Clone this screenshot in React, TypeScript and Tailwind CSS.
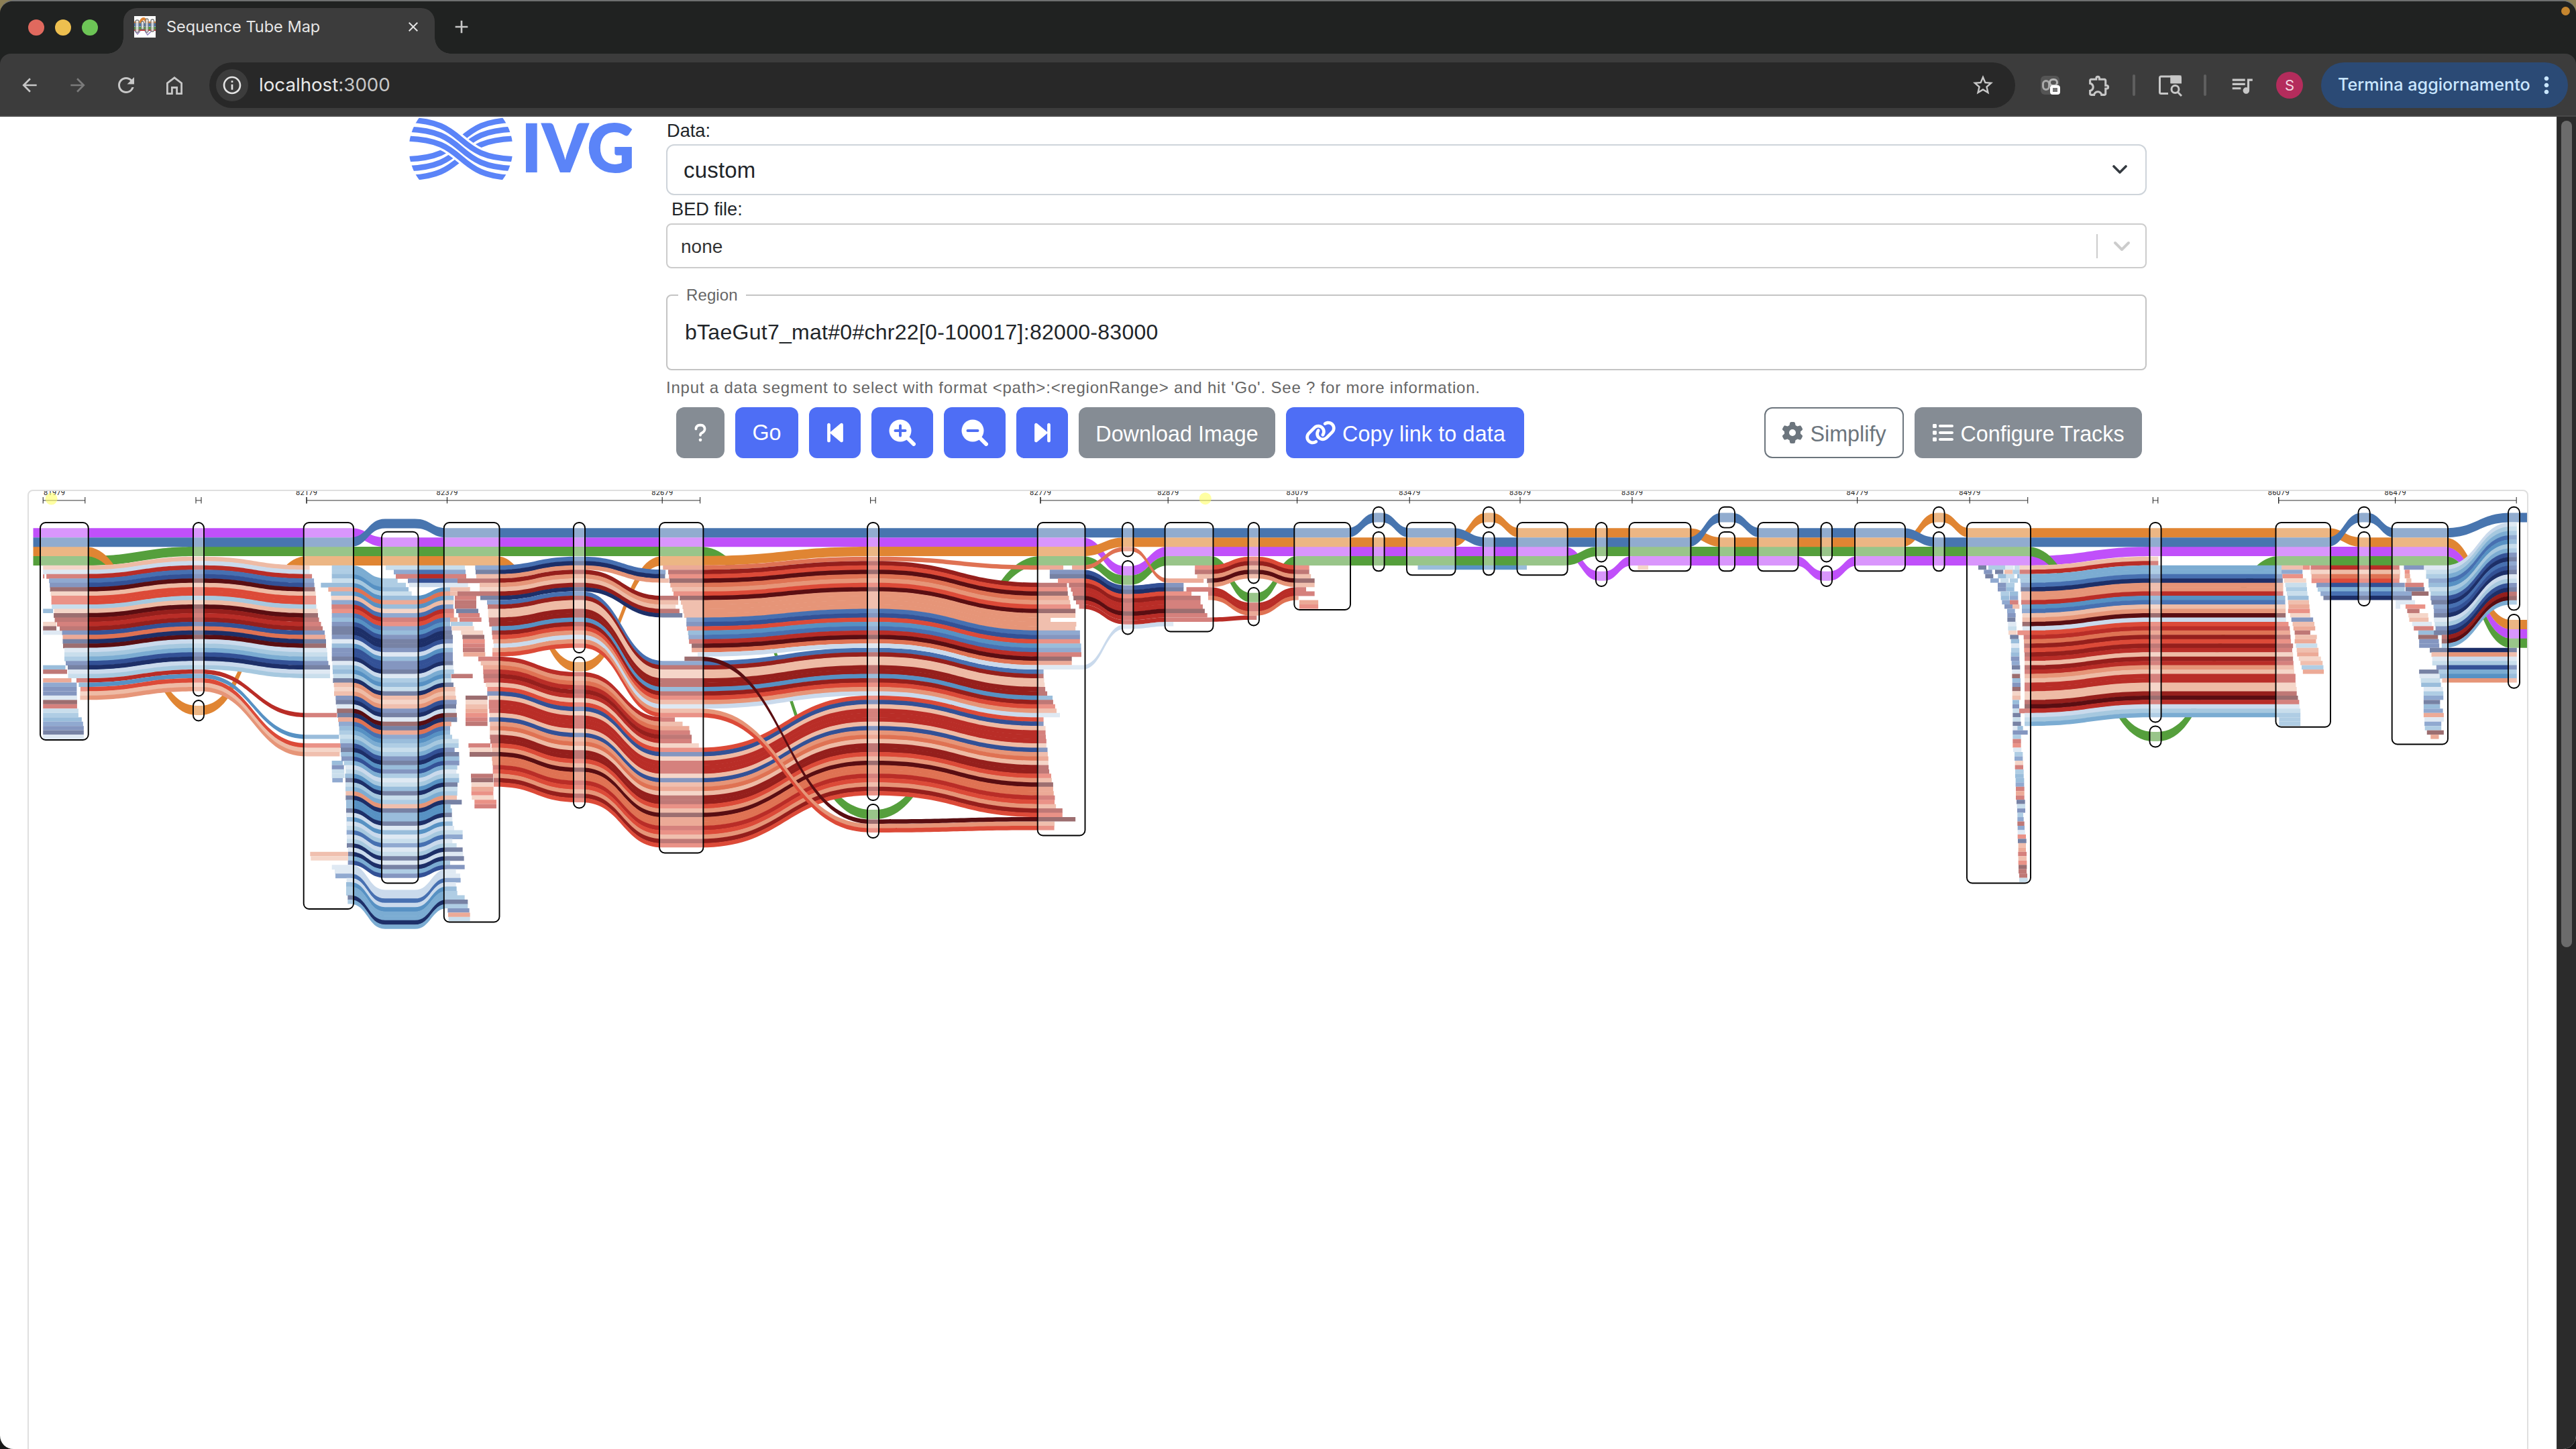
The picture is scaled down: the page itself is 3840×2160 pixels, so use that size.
import React from "react";
import { FaBackwardStep, FaForwardStep, FaLink, FaGear, FaList, FaQuestion } from "react-icons/fa6";
import {
  MdArrowBack,
  MdArrowForward,
  MdRefresh,
  MdInfoOutline,
  MdStarBorder,
  MdOutlineExtension,
  MdQueueMusic,
  MdMoreVert,
  MdClose,
  MdAdd,
} from "react-icons/md";

/* ------------------------------------------------------------------ */
/* Tube map data                                                       */
/* ------------------------------------------------------------------ */

const PALETTE: Record<string, string> = {
  p: "#EEBBA5",
  o: "#E69578",
  c: "#DF7253",
  r: "#DC4A38",
  d: "#B92D27",
  m: "#951F1C",
  k: "#5A0E12",
  l: "#CADAEC",
  i: "#A6C8DF",
  s: "#7BACD2",
  t: "#5791C3",
  b: "#4770B1",
  n: "#335196",
  y: "#1D2F68",
};

const READ = 6.47;
const HAP = 13.87;
const R = (row: number) => 842.8 + READ * row;
const H = (row: number) => 787.3 + HAP * row;
const UP = 764.5;

/* x extents of every node column, left to right */
const N: [number, number][] = [
  [0, 0],
  [60, 131.7],
  [288, 304],
  [452.7, 527],
  [569, 623.5],
  [661.8, 744.5],
  [855, 872],
  [983, 1048.4],
  [1293, 1310],
  [1546.7, 1617.5],
  [1673, 1689.4],
  [1736.6, 1808.5],
  [1860.7, 1877],
  [1929.3, 2013],
  [2046.8, 2063.6],
  [2097, 2169.6],
  [2211, 2227.7],
  [2261.5, 2336.7],
  [2379, 2395.4],
  [2428.6, 2520.4],
  [2562.5, 2586],
  [2620.5, 2680.5],
  [2714.5, 2731],
  [2765, 2840],
  [2882, 2898.6],
  [2932, 3027],
  [3204.5, 3221.6],
  [3392.5, 3474],
  [3515.5, 3532.7],
  [3565.7, 3649],
  [3739, 3756],
];

/* [column, top, bottom] of each node outline */
const BOXES: [number, number, number][] = [
  [1, 779, 1103],
  [2, 779, 1037.5],
  [2, 1044, 1074.5],
  [3, 779, 1355],
  [4, 792.8, 1316.5],
  [5, 779, 1374.5],
  [6, 779, 973],
  [6, 979.5, 1204.5],
  [7, 779, 1271.5],
  [8, 779, 1193],
  [8, 1199, 1249],
  [9, 779, 1245.5],
  [10, 779, 829.5],
  [10, 836, 945.5],
  [11, 779, 941.5],
  [12, 779, 869.5],
  [12, 876, 932.5],
  [13, 779, 909],
  [14, 755.8, 786.6],
  [14, 793, 851.3],
  [15, 779, 857.3],
  [16, 755.8, 786.6],
  [16, 793, 857.3],
  [17, 779, 857.3],
  [18, 779, 837.5],
  [18, 843.7, 874],
  [19, 779, 851.3],
  [20, 755.8, 786.6],
  [20, 793, 851.3],
  [21, 779, 851.3],
  [22, 779, 837.5],
  [22, 843.7, 874],
  [23, 779, 851.3],
  [24, 755.8, 786.6],
  [24, 793, 851.3],
  [25, 779, 1316.5],
  [26, 779, 1076.5],
  [26, 1082.5, 1113.5],
  [27, 779, 1083.7],
  [28, 755.8, 786.6],
  [28, 793, 903],
  [29, 779, 1109.5],
  [30, 755.8, 909.4],
  [30, 916, 1025.7],
];

const PURPLE = [0, 0, 0, 1, 1, 1, 1, 1, 1, 843.9, 2, 2, 2, 2, 2, 2, 2, 851.7, 3, 3, 3, 851.7, 3, 3, 3, 2, 2, 2, 2, 938];
const BLUE = [1, 1, 1, 773.4, 0, 0, 0, 0, 0, 0, 0, 0, 0, UP, 0, 1, 1, 1, 1, UP, 0, 0, 0, 1, 1, 1, 1, UP, 0, UP];
const ORANGE = [2, 1051.9, 3, 3, 3, 987, 3, 2, 2, 1, 1, 1, 1, 1, 1, UP, 0, 0, 0, 1, 1, 1, 1, UP, 0, 0, 0, 1, 1, 924];
const GREEN = [3, 2, 2, 2, 2, 2, 2, 1207, 3, 857.7, 3, 883.8, 3, 3, 3, 3, 3, 2, 2, 2, 2, 2, 2, 2, 2, 1091, 3, 3, 3, 951.8];

type Knot = [number, number];

const INSET = 5;

/* Outline of a constant-height ribbon running through a list of columns */
function ribbon(start: number, end: number, knots: Knot[], h: number): string {
  const pts = knots.map(([c, y]) => ({ a: N[c][0] + INSET, b: N[c][1] - INSET, y }));
  let d = `M${start} ${pts[0].y}`;
  for (let j = 1; j < pts.length; j++) {
    const p = pts[j - 1];
    const q = pts[j];
    const from = Math.max(p.b, j === 1 ? start : p.b);
    const m = (from + q.a) / 2;
    d += `H${from}C${m} ${p.y} ${m} ${q.y} ${q.a} ${q.y}`;
  }
  const last = pts[pts.length - 1];
  d += `H${end}V${last.y + h}`;
  for (let j = pts.length - 1; j > 0; j--) {
    const p = pts[j - 1];
    const q = pts[j];
    const from = Math.max(p.b, j === 1 ? start : p.b);
    const m = (from + q.a) / 2;
    d += `H${q.a}C${m} ${q.y + h} ${m} ${p.y + h} ${from} ${p.y + h}`;
  }
  return d + `H${start}Z`;
}

const axis = (offset: number, k: number) => (v: number) => offset + v / k;
const xa = axis(0, 2.0103);
const xb = axis(450, 3);
const xc = axis(640, 2.8);
const xd = axis(1000, 2.3758);
const xe = axis(1540, 2.3758);
const xf = axis(2880, 1.6333);
const xg = axis(2930, 3);

type Group = { c: string; x0: number[]; x1: number[]; k: Knot[] };

const seq = (s: string) => s.split(" ").map(Number);

const GROUPS: Group[] = [
  {
    c: "pldbnkprripkmdmncyklisnyli",
    x0: seq("129 129 139 147 149 150 152 154 154 155 162 161 164 171 179 186 188 188 189 193 193 193 197 203 204 204").map(xa),
    x1: seq("928 928 935 941 942 944 946 947 947 948 952 953 956 962 967 973 975 977 977 980 981 981 984 989 989 989").map(xa),
    k: [[1, R(0)], [2, R(-2)], [3, R(0)]],
  },
  { c: "d", x0: [xa(229)], x1: [xa(1010)], k: [[1, R(26)], [2, R(24)], [3, R(34)]] },
  { c: "t", x0: [xa(236)], x1: [xa(1016)], k: [[1, R(27)], [2, R(25)], [3, R(39)]] },
  { c: "rpo", x0: [xa(241), xa(240), xa(240)], x1: [xa(1021), xa(1020), xa(1018)], k: [[1, R(28)], [2, R(26)], [3, R(41)]] },
  { c: "ssti", x0: seq("134 134 134 134").map(xb), x1: seq("428 465 477 491").map(xb), k: [[3, R(0)], [4, R(3)]] },
  {
    c: "tctpbdrbtnyynltnnylstiyoponylkycbtsisnytnslityisoyttyltlibliylysn",
    x0: seq(
      "85 118 130 131 133 133 134 134 134 134 134 134 134 134 134 134 134 134 136 137 138 140 139 143 145 144 151 152 155 157 159 162 165 167 167 170 171 173 174 175 177 188 195 196 193 195 195 195 196 196 198 198 198 198 200 199 200 200 201 201 201 206 207 207 206"
    ).map(xb),
    x1: seq(
      "663 663 679 679 677 680 680 663 663 669 671 675 675 675 675 675 675 676 677 680 666 668 678 686 686 689 692 690 689 693 694 668 663 663 672 701 701 683 703 704 704 695 691 703 703 696 696 695 693 715 665 671 671 673 674 681 719 719 673 692 719 721 725 663 728"
    ).map(xb),
    k: [[3, R(4)], [4, R(7)], [5, R(5)]],
  },
  {
    c: "llbltssys",
    x0: seq("134 147 150 200 198 198 198 205 205").map(xb),
    x1: seq("689 708 710 689 692 695 728 742 742").map(xb),
    k: [[3, R(69)], [4, R(69) + 37.2], [5, R(70)]],
  },
  { c: "ibdnl", x0: seq("375 411 420 474 480").map(xb), x1: seq("729 732 735 696 743").map(xb), k: [[4, R(0)], [5, R(0)]] },
  { c: "byo", x0: seq("775 777 780").map(xb), x1: seq("986 984 1000").map(xc), k: [[5, R(0)], [6, R(-2)], [7, R(1)]] },
  {
    c: "mopmy",
    x0: seq("696 795 795 696 798").map(xb),
    x1: seq("1039 1039 1028 1044 1056").map(xc),
    k: [[5, R(3)], [6, R(1)], [7, R(7)]],
  },
  {
    c: "bmppmmtmrol",
    x0: seq("828 831 833 833 836 838 849 850 852 856 858").map(xb),
    x1: seq("1320 1320 1322 1324 1326 1333 1352 1354 1361 1366 1378").map(xd),
    k: [[5, R(8)], [6, R(6)], [7, R(22)], [8, R(19)], [9, R(24)]],
  },
  {
    c: "docdmdp",
    x0: seq("789 800 810 811 812 814 823").map(xb),
    x1: seq("1025 1057 1085 1088 1095 1095 1125").map(xc),
    k: [[5, R(21)], [6, 1001.8], [7, R(35)]],
  },
  {
    c: "rnpdddpnocpmmrokccdromr",
    x0: seq("829 829 836 836 836 838 840 838 841 841 840 841 843 848 850 750 850 852 854 854 858 858 858").map(xb),
    x1: seq(
      "1320 1320 1327 1327 1328 1330 1330 1334 1335 1337 1337 1338 1340 1347 1349 1354 1354 1356 1360 1359 1364 1387 1387"
    ).map(xd),
    k: [[5, R(28)], [6, 1001.8 + 7 * READ], [7, R(42)], [8, R(30)], [9, R(35)]],
  },
  { c: "c", x0: [xc(975)], x1: [xd(1390)], k: [[7, R(0)], [8, R(-2)], [9, R(0)]] },
  {
    c: "mrkcorkoooobnrtbdkc",
    x0: seq("997 1000 1002 1006 1013 1019 1045 1050 1057 1060 1064 1073 1073 1075 1080 1082 1084 1095 1095").map(xc),
    x1: seq("1403 1405 1406 1410 1414 1416 1433 1433 1345 1436 1433 1449 1449 1449 1453 1453 1454 1420 1420").map(xd),
    k: [[7, R(1)], [8, R(-1)], [9, R(4)]],
  },
  {
    c: "l",
    x0: [xc(1120)],
    x1: [xe(497)],
    k: [[7, R(20)], [8, R(18)], [9, R(23)], [10, 930.7], [11, R(13)]],
  },
  {
    c: "or",
    x0: [xb(852), xb(852)],
    x1: [xd(1359), xd(1358)],
    k: [[5, R(19)], [6, R(17)], [7, R(33)], [8, 1228], [9, R(59)]],
  },
  { c: "k", x0: [xc(1065)], x1: [xd(1433)], k: [[7, R(21)], [8, 1221.5], [9, R(58)]] },
  {
    c: "nyrmddkd",
    x0: seq("59 59 88 127 134 140 143 152").map(xe),
    x1: seq("533 533 561 593 593 601 608 617").map(xe),
    k: [[9, R(1)], [10, 872.5], [11, R(4)]],
  },
  { c: "d", x0: [xe(163)], x1: [xe(792)], k: [[9, R(9)], [10, 872.5 + 8 * READ], [11, R(12)], [12, 917.6]] },
  { c: "c", x0: [xe(138)], x1: [xe(604)], k: [[9, R(0)], [10, 815.3], [11, R(3)]] },
  {
    c: "rmoko",
    x0: seq("573 573 581 616 620").map(xe),
    x1: seq("978 978 984 997 997").map(xe),
    k: [[11, R(0)], [12, R(-2)], [13, R(0)]],
  },
  { c: "ddc", x0: seq("543 620 620").map(xe), x1: seq("967 997 940").map(xe), k: [[11, R(5)], [12, 898.3], [13, R(5)]] },
  { c: "t", x0: [2113.5], x1: [2276], k: [[15, R(0)], [17, R(0)]] },
  { c: "pd", x0: [xg(242), xg(242)], x1: [3217.4, 3217.4], k: [[25, R(0)], [26, R(-2)]] },
  {
    c: "ssbyoodtbpoklrdcmrmdpmdopddppmkdlis",
    x0: seq(
      "243 245 247 247 249 249 249 252 252 254 254 254 255 232 260 261 262 262 264 264 264 264 264 264 264 264 264 264 264 264 264 240 264 264 264"
    ).map(xg),
    x1: seq(
      "851 851 853 854 855 855 855 860 860 861 861 861 862 868 871 872 873 874 879 877 879 879 880 881 882 885 885 886 888 888 891 894 895 897 897"
    ).map(xf),
    k: [[25, R(2)], [26, R(0)], [27, R(0)]],
  },
  {
    c: "dpcrnsby",
    x0: seq("922 922 924 924 936 939 946 953").map(xf),
    x1: seq("1138 1140 1139 1138 1151 1151 1168 1168").map(xf),
    k: [[27, R(0)], [29, R(0)]],
  },
  {
    c: "lisbtisnybnylinymks",
    x0: seq("1198 1203 1203 1209 1209 1211 1214 1214 1216 1221 1222 1222 1222 1224 1226 1222 1241 1241 1241").map(xf),
    x1: Array(19).fill(3751.8),
    k: [[29, R(0)], [30, 778.4]],
  },
  {
    c: "yolinsto",
    x0: seq("1212 1216 1218 1218 1228 1234 1236 1242").map(xf),
    x1: Array(8).fill(3751.8),
    k: [[29, R(19)], [30, R(19)]],
  },
];

/* Short reads lying inside one node: "row colour x0 x1" */
const LOOSE: [(v: number) => number, string][] = [
  [
    xa,
    "2 d 129 133,10 t 129 159,13 p 129 169,14 k 129 169,15 l 129 186,23 t 129 196,24 m 129 201,26 c 129 214,27 b 129 230,28 n 129 230,29 n 129 230,30 l 129 231,31 k 129 231,32 d 129 231,33 i 129 235,34 s 129 235,35 t 129 245,36 b 129 249,37 n 129 251,38 y 129 251,39 l 129 251",
  ],
  [
    xb,
    "45 t 134 183,46 n 134 188,47 i 134 190,48 i 134 190,49 b 136 183,66 o 37 207,67 p 40 207,79 n 652 749,80 c 654 752,81 i 656 752,5 o 663 752,6 o 663 698,7 d 684 780,8 m 684 780,9 m 684 780,10 y 690 789,11 d 700 795,12 c 663 696,12 d 705 803,13 s 666 764,14 p 670 770,15 p 712 810,16 k 718 816,17 r 720 818,18 d 720 818,19 m 720 818,20 c 722 820,25 m 668 764,30 k 732 830,31 p 732 830,32 o 732 830,33 c 732 830,34 r 732 830,35 d 732 830,36 m 732 830,41 d 745 843,42 p 750 848,48 m 756 856,49 k 757 856,50 p 758 857,51 c 758 857,52 r 758 856,53 p 760 858,54 r 772 870,55 d 772 870",
  ],
  [xe, "8 c 943 1010,9 r 943 1010"],
  [axis(0, 1), "0 p 2441.5 2457"],
  [
    xf,
    "35 s 845 897,36 s 845 897,0 o 851 903,0 r 903 920,1 b 851 902,2 r 853 903,3 p 857 911,4 i 860 912,5 s 862 913,6 i 864 914,7 t 866 917,8 o 867 918,9 c 868 919,10 r 867 920,11 p 872 921,12 n 875 928,13 o 878 931,14 c 880 933,15 m 883 921,16 o 884 937,17 c 883 935,18 i 886 938,19 o 888 941,20 c 889 941,21 p 893 947,22 o 897 951,23 s 900 953,24 c 903 954,0 n 1149 1198,1 r 1151 1163,2 c 1151 1164,3 o 1155 1167,4 d 1152 1197,5 y 1153 1199,6 k 1160 1209,8 l 1129 1176,9 l 1129 1140,9 r 1153 1201,10 m 1157 1187,11 p 1160 1208,12 o 1162 1209,13 l 1169 1217,14 d 1173 1221,15 t 1184 1232,16 k 1184 1232,17 n 1186 1234,18 n 1186 1235,24 y 1186 1234,25 l 1187 1236,26 i 1190 1237,27 t 1191 1239,28 l 1197 1244,29 s 1197 1245,30 b 1197 1245,31 y 1197 1237,32 t 1197 1237,33 b 1197 1244,34 c 1197 1246,35 l 1199 1246,36 b 1199 1240,37 s 1200 1240,38 k 1205 1246,39 c 1214 1234",
  ],
  [
    xg,
    "0 y 57 93,0 s 102 177,0 l 177 215,0 i 219 242,1 n 82 119,1 y 132 169,1 o 174 211,1 s 211 242,2 y 88 124,2 t 145 182,2 i 182 218,2 t 231 242,3 b 111 149,3 i 156 193,3 s 198 234,4 n 144 182,4 s 182 219,5 n 144 182,5 t 182 218,6 s 157 195,6 t 197 235,7 t 158 195,7 b 197 235,8 b 163 198,8 d 198 236,9 n 174 210,9 o 210 241,10 b 186 221,11 n 187 224,12 y 187 223,13 l 190 227,14 i 190 228,15 p 192 229,16 y 199 237,17 t 203 240,18 l 204 241,19 s 204 241,20 t 203 241,21 n 203 241,22 b 206 242,23 y 207 244,24 l 208 245,25 k 208 244,26 t 209 246,27 n 209 246,28 k 209 246,29 p 209 246,30 o 209 246,31 t 210 240,32 n 210 240,33 i 211 240,34 y 211 246,35 i 211 246,36 y 211 248,37 l 211 232,37 t 232 257,38 n 211 278,39 s 211 248,40 d 211 248,41 r 211 248,42 l 213 250,43 s 219 256,44 b 219 256,45 p 221 258,46 d 221 258,47 s 222 260,48 t 222 260,49 t 224 262,50 b 224 262,51 d 225 263,52 c 225 263,53 d 225 263,54 y 228 266,55 i 230 267,56 n 231 267,57 s 232 258,58 b 232 260,59 m 232 263,60 b 233 264,61 l 233 266,62 r 233 270,63 y 234 272,64 o 236 270,65 c 236 270,66 d 235 273,67 o 236 273,68 r 236 274,69 k 237 274,70 m 237 273,71 m 240 276,72 i 240 278",
  ],
];

const RULER_SEGMENTS = [
  [64.2, 126.8],
  [292, 300],
  [457, 1043.6],
  [1297.6, 1305.2],
  [1551, 3022.7],
  [3209.4, 3216.8],
  [3396.7, 3751.2],
];

const RULER_LABELS: [number, string, boolean][] = [
  [81, "81979", false],
  [457, "82179", true],
  [666.5, "82379", true],
  [987.2, "82679", true],
  [1551, "82779", true],
  [1741.2, "82879", true],
  [1933.6, "83079", true],
  [2101.2, "83479", true],
  [2266, "83679", true],
  [2433, "83879", true],
  [2768.6, "84779", true],
  [2936.2, "84979", true],
  [3396.7, "86079", true],
  [3570.6, "86479", true],
];

const hapTop = (v: number) => (v < 10 ? H(v) : v);

function TubeMap() {
  const haps: [string, number[]][] = [
    ["#C050FA", PURPLE],
    ["#559F3C", GREEN],
    ["#E08533", ORANGE],
    ["#4875AF", BLUE],
  ];
  return (
    <svg className="block h-[1428px] w-[3724px]" viewBox="43 732 3724 1428">
      {haps.map(([color, rows]) => (
        <path
          key={color}
          fill={color}
          d={ribbon(49.5, 3767, rows.map((v, i): Knot => [i + 1, hapTop(v)]), HAP + 0.2)}
        />
      ))}
      {LOOSE.map(([x, list], gi) =>
        list.split(",").map((item, i) => {
          const [row, color, a, b] = item.split(" ");
          return (
            <rect
              key={`${gi}-${i}`}
              x={x(+a)}
              y={R(+row)}
              width={x(+b) - x(+a)}
              height={READ}
              fill={PALETTE[color]}
            />
          );
        })
      )}
      {GROUPS.map((g, gi) =>
        g.c.split("").map((color, i) => (
          <path
            key={`${gi}-${i}`}
            fill={PALETTE[color]}
            d={ribbon(g.x0[i], g.x1[i], g.k.map(([c, y]): Knot => [c, y + i * READ]), READ + (i < g.c.length - 1 ? 0.5 : 0))}
          />
        ))
      )}
      {BOXES.map(([c, top, bottom], i) => (
        <rect
          key={i}
          x={N[c][0]}
          y={top}
          width={N[c][1] - N[c][0]}
          height={bottom - top}
          rx={8}
          fill="#FFFFFF"
          fillOpacity={0.4}
          stroke="#000000"
          strokeWidth={1.9}
        />
      ))}
      {RULER_SEGMENTS.map(([a, b]) => (
        <path key={a} d={`M${a} 746H${b}M${a} 741V750.6M${b} 741V750.6`} stroke="#333333" strokeWidth={1.1} fill="none" />
      ))}
      {RULER_LABELS.map(([x, text, tick]) => (
        <g key={text}>
          {tick && <path d={`M${x} 741V750.6`} stroke="#222222" strokeWidth={1.1} />}
          <text
            x={x}
            y={738.2}
            textAnchor="middle"
            textLength={32}
            fontSize={11}
            fill="#222222"
            className="font-['Roboto',sans-serif]"
          >
            {text}
          </text>
        </g>
      ))}
      <circle cx={76.6} cy={743.6} r={9} fill="#FFFF66" fillOpacity={0.6} />
      <circle cx={1796.7} cy={743.2} r={9} fill="#FFFF66" fillOpacity={0.6} />
    </svg>
  );
}

/* ------------------------------------------------------------------ */
/* Browser chrome                                                      */
/* ------------------------------------------------------------------ */

function Favicon() {
  return (
    <svg className="size-8 shrink-0" viewBox="0 0 32 32">
      <rect width="32" height="32" fill="#fff" />
      <path d="M0 10H8C10 10 10 4 14 4S17 10 20 10H32" stroke="#E08533" strokeWidth="4" fill="none" />
      <path d="M0 13H32" stroke="#4875AF" strokeWidth="5" />
      <path d="M0 18H32" stroke="#559F3C" strokeWidth="4" />
      <path d="M0 21H32" stroke="#C23A3A" strokeWidth="2" />
      <path d="M1 22L5 27L9 22M16 22L20 28L26 22" stroke="#9A8CC0" strokeWidth="1.6" fill="none" />
      <g fill="#fff" fillOpacity=".7" stroke="#777" strokeWidth="1.3">
        <rect x="2" y="6" width="5" height="18" rx="2" />
        <rect x="10.500" y="8" width="4" height="12" rx="2" />
        <rect x="17" y="4" width="4" height="20" rx="2" />
        <rect x="25" y="5" width="4.500" height="18" rx="2" />
      </g>
    </svg>
  );
}

function TabStrip() {
  return (
    <div className="flex h-20 shrink-0 items-end bg-[#202221]">
      <div className="flex h-20 w-[184px] items-center gap-4 pt-0.5 pl-[42px]">
        <div className="size-6 rounded-full bg-[#E0695E]" />
        <div className="size-6 rounded-full bg-[#EDBF4F]" />
        <div className="size-6 rounded-full bg-[#6DC556]" />
      </div>
      <div className="relative flex h-[68px] w-[464px] items-center rounded-t-[20px] bg-[#3C3C3C] pr-5 pb-3 pl-4">
        <div className="absolute bottom-0 -left-6 size-6 bg-[radial-gradient(circle_at_0_0,transparent_23.5px,#3C3C3C_24px)]" />
        <div className="absolute -right-6 bottom-0 size-6 bg-[radial-gradient(circle_at_100%_0,transparent_23.5px,#3C3C3C_24px)]" />
        <Favicon />
        <span className="ml-4 grow text-[23.500px] leading-8 whitespace-nowrap text-[#E6E6E6]">Sequence Tube Map</span>
        <MdClose className="size-6 text-[#E3E3E3]" />
      </div>
      <div className="flex h-20 w-20 items-center justify-center">
        <MdAdd className="size-8 text-[#C7C7C7]" />
      </div>
      <div className="mb-[57px] ml-auto mr-[9px] size-[13px] rounded-full bg-[#C5862F]" />
    </div>
  );
}

function HomeIcon() {
  return (
    <svg className="h-8 w-8" viewBox="0 0 32 32" fill="none" stroke="#C7C7C7" strokeWidth="2.8">
      <path d="M5.400 28.600V13L16 4.800L26.600 13V28.600H19.600V19.500H12.400V28.600Z" />
    </svg>
  );
}

function Toolbar() {
  return (
    <div className="bg-[#202221]">
      <div className="flex h-[94px] items-center rounded-t-[16px] border-b-2 border-[#494949] bg-[#3C3C3C] pr-3 pb-2.5 pt-3">
        <div className="flex w-[312px] items-center gap-10 pl-7">
          <MdArrowBack className="size-8 text-[#C7C7C7]" />
          <MdArrowForward className="size-8 text-[#7B7B7B]" />
          <MdRefresh className="-mx-0.5 size-9 text-[#C7C7C7]" />
          <HomeIcon />
        </div>
        <div className="flex h-[68px] w-[2692px] items-center rounded-full bg-[#282828] pr-[30px] pl-2.5">
          <div className="flex size-12 items-center justify-center rounded-full bg-[#3C3C3C]">
            <MdInfoOutline className="size-8 text-[#E3E3E3]" />
          </div>
          <span className="ml-4 grow text-[27.700px] text-[#E8E8E8]">
            localhost<span className="text-[#C7C7C7]">:3000</span>
          </span>
          <MdStarBorder className="size-9 text-[#C7C7C7]" />
        </div>
        <div className="flex grow items-center pl-[38px]">
          <div className="relative h-7 w-7 rounded-[6px] bg-[#555555]">
            <div className="absolute top-1.5 left-0.5 h-4 w-3 rounded-full border-[3px] border-[#A9A9A9]" />
            <div className="absolute top-1 left-3 h-3 w-3.5 rounded-full border-[3px] border-[#B5B5B5]" />
            <div className="absolute top-3.5 left-3.5 h-3.5 w-[15px] rounded-[4px] border-4 border-white bg-[#777777]" />
          </div>
          <MdOutlineExtension className="ml-[41px] size-[37px] text-[#C7C7C7]" />
          <div className="ml-[31px] h-8 w-1 rounded-full bg-[#5E5E5E]" />
          <svg className="ml-[34px] h-9 w-9" viewBox="0 0 36 36" fill="none" stroke="#C7C7C7" strokeWidth="3">
            <path d="M15 30.500H4.500Q2.500 30.500 2.500 28.500V7Q2.500 5 4.500 5H31.500Q33.500 5 33.500 7V14H20V5" />
            <path d="M20 5H33V13.500H20Z" fill="#C7C7C7" />
            <circle cx="25.500" cy="24" r="5.500" />
            <path d="M29.500 28.500L35 34" />
          </svg>
          <div className="ml-8 h-8 w-1 rounded-full bg-[#5E5E5E]" />
          <MdQueueMusic className="ml-[34px] size-[38px] text-[#C7C7C7]" />
          <div className="ml-[32px] flex size-10 items-center justify-center rounded-full bg-[#B42C5C] text-[22px] text-[#F4D8E2]">S</div>
        </div>
        <div className="flex h-[68px] w-[368px] shrink-0 items-center rounded-full bg-[#2B4A75] pl-[25px] text-[#C9E6FF]">
          <span className="text-[25.200px] font-medium whitespace-nowrap">Termina aggiornamento</span>
          <MdMoreVert className="mr-[12px] ml-auto size-10 shrink-0" />
        </div>
      </div>
    </div>
  );
}

/* ------------------------------------------------------------------ */
/* Page header                                                         */
/* ------------------------------------------------------------------ */

function Logo() {
  const front = [180, 194, 208].map((y) => `M602 ${y}C705 ${y} 671 ${y + 58.8} 774 ${y + 58.8}`);
  const back = [180, 194, 208].map((y) => `M602 ${y + 58.8}C705 ${y + 58.8} 671 ${y} 774 ${y}`);
  return (
    <svg className="ml-[604px] h-[100px] w-[346px]" viewBox="605 175.500 346 100">
      <clipPath id="disc">
        <circle cx="688" cy="223.300" r="77.500" />
      </clipPath>
      <g clipPath="url(#disc)" fill="none">
        {back.map((d) => (
          <path key={d} d={d} stroke="#5B84F8" strokeWidth="8.400" />
        ))}
        {front.map((d) => (
          <path key={d} d={d} stroke="#fff" strokeWidth="15" />
        ))}
        {front.map((d) => (
          <path key={d} d={d} stroke="#5B84F8" strokeWidth="8.400" />
        ))}
      </g>
      <text
        x="778"
        y="258.500"
        fontSize="100"
        textLength="169"
        lengthAdjust="spacingAndGlyphs"
        fill="#5B84F8"
        className="font-['Lato',sans-serif] font-extrabold"
      >
        IVG
      </text>
    </svg>
  );
}

function ZoomIcon({ plus }: { plus: boolean }) {
  return (
    <svg className="size-10" viewBox="0 0 40 40">
      <circle cx="17" cy="17" r="16.500" fill="#fff" />
      <path d="M28 28L37 37" stroke="#fff" strokeWidth="6" strokeLinecap="round" />
      <path d={plus ? "M9.500 17H24.500M17 9.500V24.500" : "M9.500 17H24.500"} stroke="#4E6EF5" strokeWidth="4" strokeLinecap="round" />
    </svg>
  );
}

const BTN = "flex h-[76px] items-center justify-center rounded-[12px] text-[32.3px] whitespace-nowrap text-white";

function Controls() {
  return (
    <div className="mt-[14px] flex pr-[7px] pl-[15px]">
      <div className={`${BTN} w-[72px] bg-[#858C94]`}>
        <FaQuestion className="size-[30px]" />
      </div>
      <div className={`${BTN} ml-4 w-[94px] bg-[#4E6EF5]`}>Go</div>
      <div className={`${BTN} ml-4 w-[77px] bg-[#4E6EF5]`}>
        <FaBackwardStep className="size-[38px]" />
      </div>
      <div className={`${BTN} ml-4 w-[92px] bg-[#4E6EF5]`}>
        <ZoomIcon plus />
      </div>
      <div className={`${BTN} ml-4 w-[92px] bg-[#4E6EF5]`}>
        <ZoomIcon plus={false} />
      </div>
      <div className={`${BTN} ml-4 w-[77px] bg-[#4E6EF5]`}>
        <FaForwardStep className="size-[38px]" />
      </div>
      <div className={`${BTN} ml-4 w-[293px] bg-[#858C94]`}>
        <span className="pt-1">Download Image</span>
      </div>
      <div className={`${BTN} ml-4 w-[355px] gap-[9px] bg-[#4E6EF5]`}>
        <FaLink className="h-[38px] w-[47px]" />
        <span className="pt-1 tracking-[0.15px]">Copy link to data</span>
      </div>
      <div className="grow" />
      <div className="flex h-[76px] w-[208px] items-center justify-center gap-2.5 rounded-[12px] border-2 border-[#6C757D] text-[32.3px] text-[#6C757D]">
        <FaGear className="size-8" />
        <span className="pt-1">Simplify</span>
      </div>
      <div className={`${BTN} ml-4 w-[339px] gap-2.5 bg-[#858C94]`}>
        <FaList className="size-8" />
        <span className="pt-1">Configure Tracks</span>
      </div>
    </div>
  );
}

function Form() {
  return (
    <div className="ml-[43px] flex w-[2207px] flex-col font-['Liberation_Sans',Arial,sans-serif] text-[#212529]">
      <div className="mt-[3px] h-[38px] pl-px text-[27.2px] leading-[35px]">Data:</div>
      <div className="flex h-[76px] items-center justify-between rounded-[12px] border-2 border-[#CED4DA] pr-[26px] pl-6 text-[33px]">
        <span className="pt-0.5 tracking-[0.2px]">custom</span>
        <svg className="h-4 w-6" viewBox="0 0 24 16" fill="none" stroke="#343A40" strokeWidth="3.600" strokeLinecap="round" strokeLinejoin="round">
          <path d="M3 3L12 12L21 3" />
        </svg>
      </div>
      <div className="h-[42px] pl-2 text-[27.2px] leading-[41px]">BED file:</div>
      <div className="flex h-[67px] items-center rounded-[8px] border-2 border-[#CCCCCC] pl-5 text-[28px] text-[#333333]">
        <span className="grow pt-0.5">none</span>
        <span className="h-9 w-0.5 bg-[#CCCCCC]" />
        <svg className="mr-[21px] ml-[22px] h-5 w-7" viewBox="0 0 28 20" fill="none" stroke="#CCCCCC" strokeWidth="4" strokeLinecap="round" strokeLinejoin="round">
          <path d="M4 5L14 15L24 5" />
        </svg>
      </div>
      <fieldset className="mt-[25px] h-[127px] rounded-[8px] border-2 border-[#C4C4C4] pl-[26px]">
        <legend className="-ml-2.5 px-3 text-[24px] leading-[30px] tracking-[0.1px] text-[#666666]">Region</legend>
        <div className="pt-5 text-[32px] leading-[40px] tracking-[0.28px]">bTaeGut7_mat#0#chr22[0-100017]:82000-83000</div>
      </fieldset>
      <div className="mt-[11px] h-[30px] text-[24px] leading-[30px] tracking-[0.8px] whitespace-nowrap text-[#666666]">
        Input a data segment to select with format &lt;path&gt;:&lt;regionRange&gt; and hit 'Go'. See ? for more information.
      </div>
      <Controls />
    </div>
  );
}

export default function App() {
  return (
    <div className="h-[2160px] w-[3840px] overflow-hidden bg-[linear-gradient(#8C7F55_50%,#1A1A1A_50%)] font-['Inter',sans-serif]">
      <div className="flex h-full flex-col overflow-hidden rounded-[20px] border-t-2 border-[#6E7070] bg-[#202221]">
        <div className="-mt-0.5 flex min-h-0 grow flex-col">
          <TabStrip />
          <Toolbar />
          <div className="flex min-h-0 grow bg-white">
            <main className="flex w-[3811px] flex-col overflow-hidden">
              <div className="flex h-[556px] shrink-0 items-start">
                <Logo />
                <Form />
              </div>
              <div className="ml-[41px] h-[1500px] w-[3728px] shrink-0 overflow-hidden rounded-[8px] border-2 border-[#DFDFDF]">
                <TubeMap />
              </div>
            </main>
            <div className="flex w-[29px] justify-center border-l border-[#3A3A3A] bg-[#2B2B2B] pt-1.5">
              <div className="h-[1232px] w-4 rounded-full bg-[#6B6B6B]" />
            </div>
          </div>
        </div>
      </div>
    </div>
  );
}
